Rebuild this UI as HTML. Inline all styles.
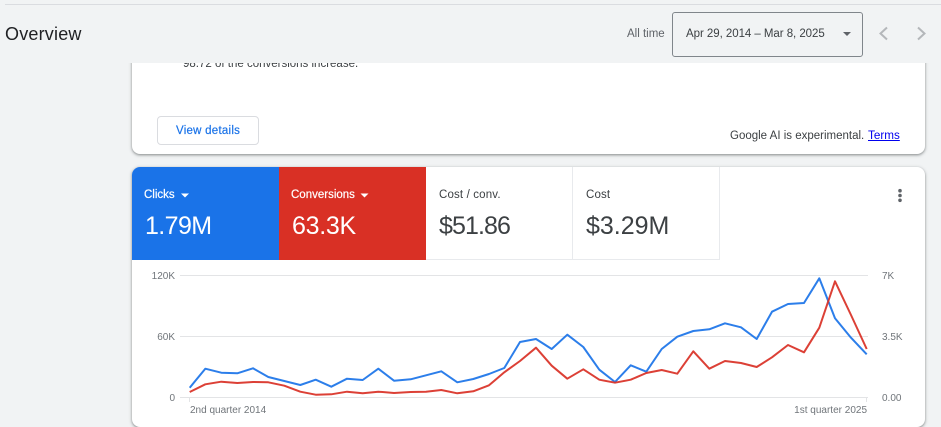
<!DOCTYPE html>
<html lang="en">
<head>
<meta charset="utf-8">
<title>Overview</title>
<style>
html,body{margin:0;padding:0;width:941px;height:427px;overflow:hidden;background:#f1f3f4;font-family:"Liberation Sans",sans-serif;}
.a{position:absolute;white-space:nowrap;}
.card{position:absolute;left:132px;width:793px;background:#fff;border-radius:8px;box-shadow:0 1px 2px rgba(60,64,67,.45),0 1px 3px 1px rgba(60,64,67,.15);}
.tile{position:absolute;top:167px;height:93px;box-sizing:border-box;}
</style>
</head>
<body>
<div class="card" style="top:40px;height:114px;"></div>
<span class="a" style="left:183px;top:57px;font-size:11.5px;line-height:14px;color:#3c4043;">98.72 of the conversions increase.</span>

<div class="a" style="left:0;top:0;width:941px;height:63px;background:#f1f3f4;"></div>
<div class="a" style="left:5px;top:4px;width:936px;height:1px;background:#dadce0;"></div>
<span class="a" style="left:5px;top:23px;font-size:18px;line-height:22px;color:#202124;letter-spacing:.2px;">Overview</span>
<span class="a" style="left:627px;top:27px;font-size:11.5px;line-height:14px;color:#5f6368;">All time</span>
<div class="a" style="left:672px;top:12px;width:191px;height:45px;box-sizing:border-box;border:1px solid #80868b;border-radius:3px;"></div>
<span class="a" style="left:686px;top:27px;font-size:11.5px;line-height:14px;color:#3c4043;letter-spacing:-.05px;">Apr 29, 2014 – Mar 8, 2025</span>
<svg class="a" style="left:0;top:0;" width="941" height="63">
<path d="M843 32h8l-4 4z" fill="#5f6368"/>
<path d="M887 28l-6.500 6 6.500 6" transform="translate(0,-0.500)" fill="none" stroke="#b4b7ba" stroke-width="2"/>
<path d="M918 28l6.500 6-6.500 6" transform="translate(0,-0.500)" fill="none" stroke="#b4b7ba" stroke-width="2"/>
</svg>

<div class="a" style="left:157px;top:116px;width:102px;height:29px;box-sizing:border-box;border:1px solid #dadce0;border-radius:4px;background:#fff;"></div>
<span class="a" style="left:176px;top:124px;font-size:11.500px;line-height:14px;color:#1a73e8;letter-spacing:.25px;-webkit-text-stroke:.2px #1a73e8;">View details</span>
<span class="a" style="left:730px;top:129px;font-size:11.500px;line-height:14px;color:#3c4043;">Google AI is experimental.</span>
<span class="a" style="left:868px;top:129px;font-size:11.700px;line-height:14px;color:#0000ee;text-decoration:underline;">Terms</span>

<div class="card" style="top:167px;height:260px;"></div>
<div class="tile" style="left:132px;width:147px;background:#1a73e8;border-top-left-radius:8px;"></div>
<div class="tile" style="left:279px;width:147px;background:#d93025;"></div>
<div class="tile" style="left:426px;width:147px;background:#fff;border-right:1px solid #e8eaed;border-bottom:1px solid #e8eaed;"></div>
<div class="tile" style="left:573px;width:147px;background:#fff;border-right:1px solid #e8eaed;border-bottom:1px solid #e8eaed;"></div>

<span class="a" style="left:144px;top:188px;font-size:11.500px;line-height:14px;color:#fff;-webkit-text-stroke:.2px #fff;">Clicks</span>
<span class="a" style="left:145px;top:211px;font-size:25px;line-height:30px;color:#fff;letter-spacing:-.6px;">1.79M</span>
<span class="a" style="left:291px;top:188px;font-size:11.500px;line-height:14px;color:#fff;-webkit-text-stroke:.2px #fff;">Conversions</span>
<span class="a" style="left:292px;top:211px;font-size:25px;line-height:30px;color:#fff;letter-spacing:-.3px;">63.3K</span>
<span class="a" style="left:439px;top:188px;font-size:11.500px;line-height:14px;color:#3c4043;letter-spacing:.15px;">Cost / conv.</span>
<span class="a" style="left:439px;top:211px;font-size:25px;line-height:30px;color:#3c4043;letter-spacing:-.9px;">$51.86</span>
<span class="a" style="left:586px;top:188px;font-size:11.500px;line-height:14px;color:#3c4043;letter-spacing:.15px;">Cost</span>
<span class="a" style="left:586px;top:211px;font-size:25px;line-height:30px;color:#3c4043;">$3.29M</span>

<svg class="a" style="left:0;top:160px;" width="941" height="50">
<path d="M181 33.500h8l-4 4z" fill="#fff"/>
<path d="M360.500 33.500h8l-4 4z" fill="#fff"/>
<circle cx="900" cy="30.700" r="1.800" fill="#5f6368"/>
<circle cx="900" cy="35.500" r="1.800" fill="#5f6368"/>
<circle cx="900" cy="40.300" r="1.800" fill="#5f6368"/>
</svg>

<svg class="a" style="left:0;top:0;" width="941" height="427">
<g stroke="#e3e4e6" stroke-width="1" fill="none">
<path d="M180 275.500H868M180 336.500H868M180 397.500H868"/>
<path d="M189.500 397v5M866.500 397v5"/>
</g>
<polyline fill="none" stroke="#1a73e8" stroke-opacity=".92" stroke-width="2" stroke-linejoin="round" points="189.700,387.700 205.300,368.700 221.300,372.700 237.300,373.300 253,368.300 268.300,377 284.300,381 300.300,385 315.700,379.700 331.300,386.700 347,378.700 362.700,380 378.300,368.700 394,380.700 410.700,379.300 426,375.300 441.300,371.300 457.300,382.300 473.300,379 489,374 504.300,368 520,342 536,339 551.700,349 567.300,334.700 583.300,347 599.300,369.700 615,382 630.700,365.300 646.300,371.700 661.700,349 677.300,336.700 693.300,331 709.300,329.300 725,323.300 741,327.300 756.700,339 772,311.700 788,304 804,303 819.300,278.300 835,318.300 851,337.700 866.700,354.300"/>
<polyline fill="none" stroke="#d93025" stroke-opacity=".92" stroke-width="2" stroke-linejoin="round" points="189.700,392 205.300,384.300 221.300,381.700 237.300,383 253,382 268.300,382.300 284.300,385.700 300.300,391.700 315.700,394.700 331.300,394.300 347,391.700 362.700,393.300 378.300,391.700 394,393 410.700,392 426,391.700 441.300,390 457.300,393.300 473.300,391.300 489,385.300 504.300,372.300 520,361 536,347.700 551.700,365.700 567.300,378.700 583.300,369.300 599.300,379.700 615,382.700 630.700,379.700 646.300,373 661.700,370 677.300,373.700 693.300,351.300 709.300,368.700 725,361 741,363 756.700,367 772,357.300 788,345 804,352.300 819.300,327.700 835,281.300 851,315 866.700,349"/>
</svg>

<span class="a" style="right:766px;top:270px;font-size:10px;line-height:13px;color:#70757a;">120K</span>
<span class="a" style="right:766px;top:331px;font-size:10px;line-height:13px;color:#70757a;">60K</span>
<span class="a" style="right:766px;top:392px;font-size:10px;line-height:13px;color:#70757a;">0</span>
<span class="a" style="left:882px;top:270px;font-size:10px;line-height:13px;color:#70757a;">7K</span>
<span class="a" style="left:882px;top:331px;font-size:10px;line-height:13px;color:#70757a;">3.5K</span>
<span class="a" style="left:882px;top:392px;font-size:10px;line-height:13px;color:#70757a;">0.00</span>
<span class="a" style="left:190px;top:405px;font-size:10px;line-height:12px;color:#70757a;">2nd quarter 2014</span>
<span class="a" style="right:74px;top:405px;font-size:10px;line-height:12px;color:#70757a;">1st quarter 2025</span>
</body>
</html>
